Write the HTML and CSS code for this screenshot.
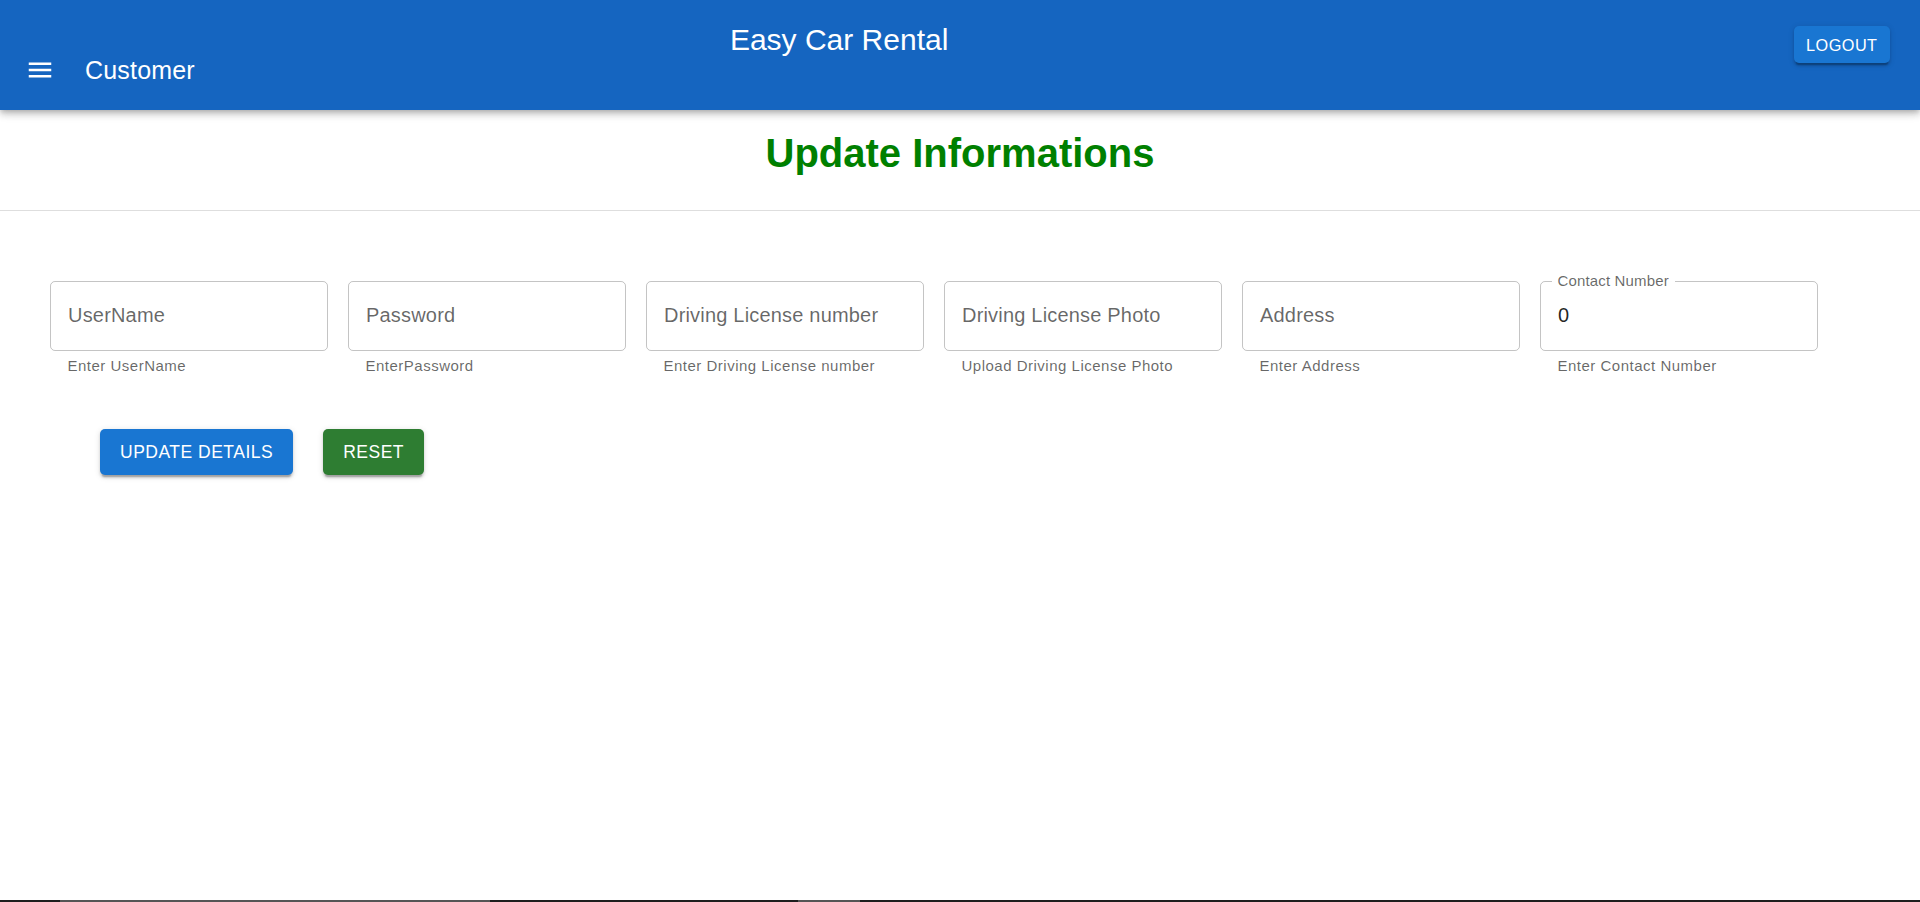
FILE: index.html
```html
<!DOCTYPE html>
<html lang="en">
<head>
<meta charset="utf-8">
<title>Easy Car Rental - Customer</title>
<link rel="stylesheet" href="styles.css">
</head>
<body>
  <header class="appbar">
    <button class="menu-btn" aria-label="menu">
      <svg viewBox="0 0 24 24" width="30" height="30"><path fill="#fff" d="M3 18h18v-2H3v2zm0-5h18v-2H3v2zm0-7v2h18V6H3z"/></svg>
    </button>
    <div class="section-title">Customer</div>
    <div class="brand">Easy Car Rental</div>
    <button class="logout-btn">LOGOUT</button>
  </header>

  <main class="content">
    <h1 class="page-title">Update Informations</h1>
    <div class="divider"></div>

    <div class="fields">
      <div class="field">
        <div class="box"><span class="placeholder">UserName</span></div>
        <div class="helper">Enter UserName</div>
      </div>
      <div class="field">
        <div class="box"><span class="placeholder">Password</span></div>
        <div class="helper">EnterPassword</div>
      </div>
      <div class="field">
        <div class="box"><span class="placeholder">Driving License number</span></div>
        <div class="helper">Enter Driving License number</div>
      </div>
      <div class="field">
        <div class="box"><span class="placeholder">Driving License Photo</span></div>
        <div class="helper">Upload Driving License Photo</div>
      </div>
      <div class="field">
        <div class="box"><span class="placeholder">Address</span></div>
        <div class="helper">Enter Address</div>
      </div>
      <div class="field">
        <div class="box"><span class="float-label">Contact Number</span><span class="value">0</span></div>
        <div class="helper">Enter Contact Number</div>
      </div>
    </div>

    <div class="actions">
      <button class="btn btn-blue">UPDATE DETAILS</button>
      <button class="btn btn-green">RESET</button>
    </div>
  </main>

  <div class="bottom-strip"></div>
</body>
</html>
```
FILE: styles.css
```css
* { box-sizing: border-box; }

html, body {
  margin: 0;
  padding: 0;
  background: #fff;
}

body {
  font-family: "Liberation Sans", Arial, sans-serif;
  display: flex;
  flex-direction: column;
  min-height: 100vh;
  overflow: hidden;
}

button {
  font-family: inherit;
  border: none;
  cursor: pointer;
}

/* ---------- App bar ---------- */
.appbar {
  height: 110px;
  flex: 0 0 110px;
  background: #1565c0;
  color: #fff;
  display: flex;
  align-items: flex-start;
  padding: 0 30px 0 25px;
  box-shadow: 0 2.5px 5px -1.25px rgba(0,0,0,0.2),
              0 5px 6.25px 0 rgba(0,0,0,0.14),
              0 1.25px 12.5px 0 rgba(0,0,0,0.12);
  position: relative;
  z-index: 1;
}

.menu-btn {
  background: transparent;
  padding: 0;
  margin-top: 55px;
  width: 30px;
  height: 30px;
  display: flex;
}

.section-title {
  margin-top: 55px;
  margin-left: 30px;
  font-size: 25px;
  line-height: 30px;
  letter-spacing: 0.19px;
}

.brand {
  margin-top: 21.6px;
  margin-left: 535px;
  font-size: 30px;
  line-height: 36px;
}

.logout-btn {
  margin-left: auto;
  margin-top: 26px;
  height: 37px;
  padding: 1px 12.5px 0;
  background: #1976d2;
  color: #fff;
  font-size: 16.25px;
  letter-spacing: 0.46px;
  border-radius: 5px;
  box-shadow: 0 3.75px 1.25px -2.5px rgba(0,0,0,0.2),
              0 2.5px 2.5px 0 rgba(0,0,0,0.14),
              0 1.25px 6.25px 0 rgba(0,0,0,0.12);
}

/* ---------- Content ---------- */
.content {
  flex: 1;
}

.page-title {
  margin: 19.5px 0 0;
  font-size: 40px;
  line-height: 46px;
  font-weight: bold;
  color: #008000;
  text-align: center;
}

.divider {
  margin-top: 34px;
  height: 1px;
  background: #dedede;
}

.fields {
  display: flex;
  gap: 20.5px;
  padding-left: 50px;
  margin-top: 70.5px;
}

.field {
  width: 277.5px;
}

.box {
  position: relative;
  height: 70px;
  border: 1px solid rgba(0,0,0,0.23);
  border-radius: 5px;
  padding: 0 17px 2px;
  display: flex;
  align-items: center;
  font-size: 20px;
  line-height: 24px;
  letter-spacing: 0.19px;
}

.placeholder {
  color: rgba(0,0,0,0.6);
  white-space: nowrap;
}

.value {
  color: rgba(0,0,0,0.87);
}

.float-label {
  position: absolute;
  top: -9.3px;
  left: 10.5px;
  padding: 0 6px;
  background: #fff;
  font-size: 15px;
  line-height: 15px;
  letter-spacing: 0.15px;
  color: rgba(0,0,0,0.6);
  white-space: nowrap;
}

.helper {
  margin: 1.5px 17.5px 0;
  font-size: 15px;
  line-height: 25px;
  letter-spacing: 0.5px;
  color: rgba(0,0,0,0.6);
  white-space: nowrap;
}

.actions {
  display: flex;
  gap: 30px;
  padding-left: 100px;
  margin-top: 51.5px;
}

.btn {
  height: 46px;
  padding: 0 20px;
  color: #fff;
  font-size: 17.5px;
  letter-spacing: 0.5px;
  border-radius: 5px;
  box-shadow: 0 3.75px 1.25px -2.5px rgba(0,0,0,0.2),
              0 2.5px 2.5px 0 rgba(0,0,0,0.14),
              0 1.25px 6.25px 0 rgba(0,0,0,0.12);
}

.btn-blue { background: #1976d2; }
.btn-green { background: #2e7d32; }

/* ---------- bottom strip ---------- */
.bottom-strip {
  flex: 0 0 2px;
  height: 2px;
  background: linear-gradient(to right,
    #1e1e1e 0, #1e1e1e 60px,
    #555 60px, #555 490px,
    #1e1e1e 490px, #1e1e1e 798px,
    #555 798px, #555 860px,
    #1e1e1e 860px, #1e1e1e 100%);
}
```
